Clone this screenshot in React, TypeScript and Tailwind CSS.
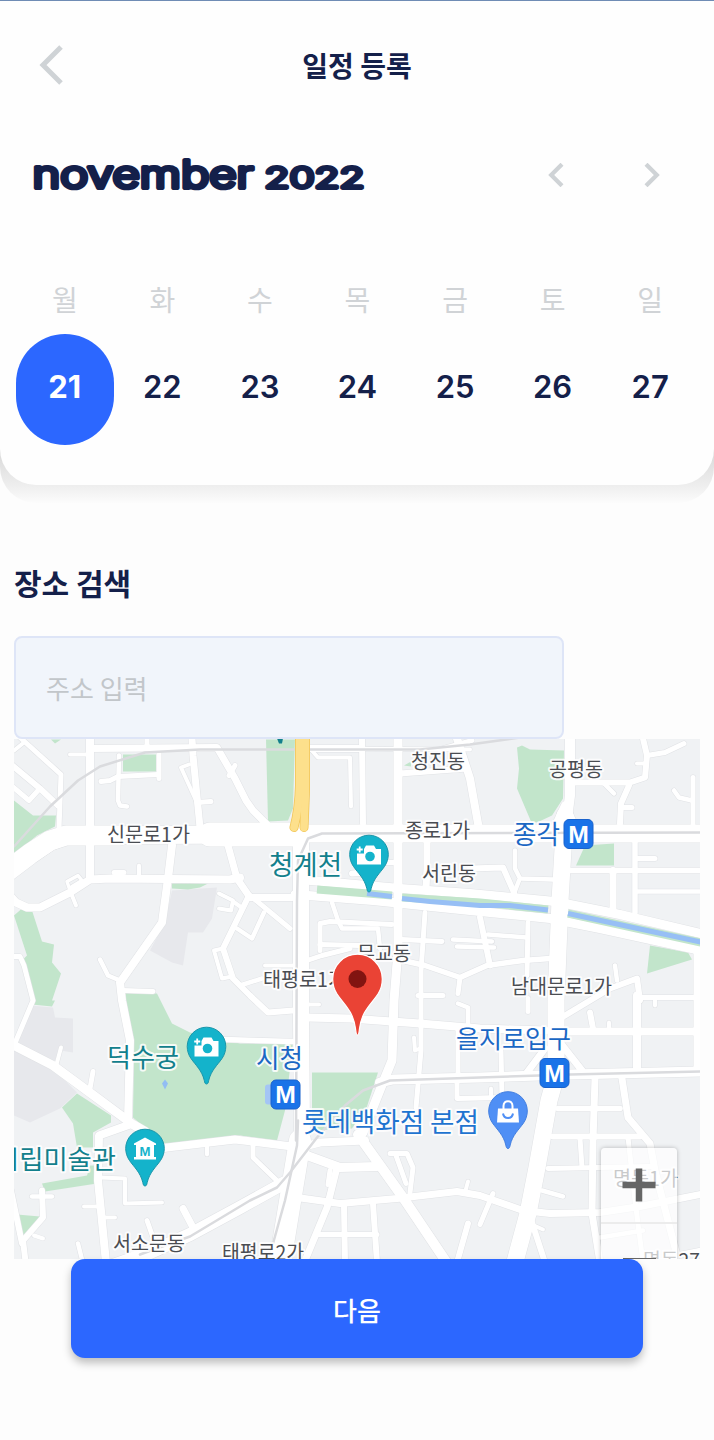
import React from "react";

const KR = "font-['Noto_Sans_CJK_KR',sans-serif]";

const days = [
  { name: "월", date: 21, active: true },
  { name: "화", date: 22 },
  { name: "수", date: 23 },
  { name: "목", date: 24 },
  { name: "금", date: 25 },
  { name: "토", date: 26 },
  { name: "일", date: 27 },
];

const parks = [
  "14,800 33,815 56,815 55,826 37,835 14,854",
  "123,754 156,754 156,771 123,771",
  "172,883 210,882 200,887 188,889 172,888",
  "14,915 22,908 32,910 42,941 54,944 52,962 61,973 52,1000 55,1000 52,1006 32,1004 24,958 27,955",
  "124,992 157,993 172,1023 190,1032 240,1043 293,1043 285,1110 277,1140 240,1135 165,1145 133,1117 134,1040",
  "77,1093 111,1115 111,1122 93,1132 93,1147 77,1147 73,1123 62,1107",
  "42,1183 87,1175 90,1165 97,1165 97,1183 45,1191",
  "17,1214 40,1216 23,1238",
  "266,739 295,739 293,808 288,820 268,821",
  "312,1072 378,1072 367,1106 352,1128 312,1130",
  "517,747 522,745 530,749 564,750 563,798 552,815 537,822 531,821 517,788 519,768",
  "576,865 585,845 614,843 614,865",
  "647,973 650,945 688,952 692,959",
  "51,739 61,739 55,743",
  "404,765 411,761 411,766",
];

const blocks = [
  "172,890 217,887 212,918 203,932 188,932 183,965 172,962 150,950 165,922",
  "30,1005 53,1007 55,1017 73,1018 73,1052 60,1050 53,1063 17,1043",
  "14,1050 53,1068 77,1092 60,1108 30,1122 14,1115",
];

const roads: [string, number][] = [
  ["90,735 90,878", 8],
  ["5,874 30,855 50,841 66,835 240,834 300,833 705,833", 18],
  ["5,872 30,853 50,840 66,835 120,835", 20],
  ["210,834 300,834", 24],
  ["90,748 217,747 235,778 246,800 253,810 267,824", 7],
  ["70,754 90,754", 4],
  ["14,750 24,742", 4],
  ["20,737 61,774 59,828", 5],
  ["10,763 40,788 58,805", 6],
  ["10,784 29,800 38,790", 5],
  ["147,739 147,748", 5],
  ["8,893 16,902 27,907 40,907 70,892 90,879 110,878 230,879 240,877", 8],
  ["70,890 67,881 78,875 82,880 72,886", 3.5],
  ["70,890 76,905", 4],
  ["114,872 124,872", 5],
  ["139,865 139,876", 4],
  ["172,845 168,878 162,922 120,982 122,1000 130,1040 128,1120", 8],
  ["100,959 108,975 120,980", 4.5],
  ["123,990 153,991", 5],
  ["119,755 118,800 120,805 127,806", 4.5],
  ["101,781 110,780 118,776 158,774", 5],
  ["159,748 159,778", 5],
  ["192,738 193,755 200,827", 7],
  ["189,764 181,767 196,800", 4],
  ["197,802 211,801", 5],
  ["229,775 235,765", 5],
  ["228,845 237,878 250,897 292,897", 7],
  ["250,895 290,928", 5],
  ["248,897 223,948 233,978 250,995 268,1012 293,1010", 6],
  ["223,948 214,950 222,978 232,976", 4],
  ["237,928 252,938 264,912", 4.5],
  ["219,893 233,900 231,910 219,908", 4],
  ["233,901 243,908", 4],
  ["10,956 20,956 24,965 33,1000 14,1045", 5],
  ["301,842 301,1020 302,1130 296,1170 288,1200", 16],
  ["300,1140 280,1262", 22],
  ["362,738 363,823", 6],
  ["310,748 362,748", 7],
  ["310,748 318,757 350,757 351,806", 4],
  ["398,738 398,950 394,1000 392,1060 383,1082 363,1132", 9],
  ["400,773 467,768", 6],
  ["457,738 470,778 478,823", 8],
  ["440,749 472,740", 5],
  ["311,748 470,749", 4],
  ["300,879 400,888 470,893 555,901 620,914 705,934", 9],
  ["295,894 373,900 470,910 550,918 600,928 705,951", 9],
  ["427,842 427,868 426,888", 7],
  ["352,873 365,872", 6],
  ["383,862 395,862", 5],
  ["332,902 338,920 342,928 378,928 380,948", 4.5],
  ["320,950 320,923 330,921 392,924", 5],
  ["320,944 360,945", 5],
  ["304,961 322,955 350,948", 5],
  ["402,939 442,941", 5],
  ["425,912 421,970 421,1050 416,1107", 5],
  ["414,1037 415,1050 420,1048", 4],
  ["453,939 492,941", 4.5],
  ["457,946 494,947", 4.5],
  ["480,917 490,965", 6],
  ["403,960 425,965 460,977 487,965 523,960 550,958", 5.5],
  ["460,977 458,993", 5],
  ["488,934 527,937", 4.5],
  ["528,922 527,975", 5],
  ["418,995 443,995", 5],
  ["265,965 293,965", 4],
  ["240,985 262,978", 4.5],
  ["570,735 570,795 565,833", 10],
  ["565,815 560,900 556,1000 556,1075 549,1100 537,1167 528,1213 514,1265", 17],
  ["552,833 565,805 578,833", 8],
  ["575,782 630,782 645,777 647,755 643,738", 6],
  ["637,763 647,763", 4],
  ["647,755 665,752 684,743", 5],
  ["603,782 614,793", 4.5],
  ["629,785 621,803 620,823", 6],
  ["622,807 632,807", 5],
  ["693,777 693,823", 5],
  ["674,790 679,797 692,800", 4.5],
  ["635,842 635,912", 5.5],
  ["637,858 655,858", 5],
  ["570,870 705,870", 5.5],
  ["637,891 705,891", 4.5],
  ["613,870 613,908", 7],
  ["515,850 515,868 520,878 553,879", 4.5],
  ["519,880 514,893", 4.5],
  ["470,868 503,867 514,892", 6],
  ["615,965 617,980", 4.5],
  ["560,1018 610,988 637,978 640,1000", 6],
  ["637,995 637,1070", 8],
  ["560,1031 705,1031", 8],
  ["590,1012 593,1028", 6],
  ["609,1022 609,1030", 4],
  ["697,950 697,1067", 7],
  ["640,997 700,997", 5],
  ["380,1082 393,1079 480,1077 570,1074 705,1071", 10],
  ["560,1042 582,1070", 7],
  ["545,1048 527,1072", 7],
  ["501,1050 502,1097 457,1098 457,1080", 5],
  ["491,1088 491,1097", 4],
  ["307,1017 350,1018 420,1023 480,1028 545,1030", 8],
  ["307,1004 319,1004", 4],
  ["458,1003 468,1007 468,1027", 4.5],
  ["458,1030 458,1072", 5],
  ["528,998 528,1011", 5],
  ["655,998 655,1005", 4],
  ["223,1039 293,1041", 5.5],
  ["10,1043 53,1065 87,1090 133,1124 145,1131", 9],
  ["61,1047 56,1066", 4],
  ["93,1071 90,1088", 5],
  ["150,1150 167,1147 235,1139 300,1147 320,1142 365,1140", 8],
  ["207,1145 207,1154", 4],
  ["130,1124 99,1135 98,1180 106,1262", 8],
  ["100,1177 125,1178 125,1203 162,1202", 4],
  ["84,1206 102,1206", 4],
  ["105,1217 115,1217", 4],
  ["32,1196 52,1196", 4.5],
  ["42,1190 43,1217 23,1240 26,1265", 6],
  ["11,1190 22,1243", 6],
  ["34,1235 43,1238", 4],
  ["183,1208 193,1227", 7],
  ["147,1220 153,1237", 5],
  ["78,1243 82,1259", 4.5],
  ["110,1266 150,1252 190,1234 240,1207 285,1182", 13],
  ["358,1134 403,1197 450,1267", 10],
  ["307,1155 340,1167 377,1166", 9],
  ["337,1167 327,1207 303,1265", 7],
  ["297,1197 340,1203 397,1198 457,1191 480,1195 523,1210 550,1213 600,1212 640,1206 705,1193", 7],
  ["344,1205 345,1262", 6],
  ["373,1203 377,1262", 6],
  ["318,1234 377,1234", 5],
  ["390,1153 407,1153 413,1167 410,1192", 5],
  ["396,1155 406,1183", 5],
  ["330,1170 328,1184", 5],
  ["468,1181 465,1192", 4],
  ["468,1223 457,1262", 6],
  ["253,1143 253,1157 280,1183", 5],
  ["595,1078 593,1140 592,1213 600,1262", 7],
  ["558,1108 620,1108", 5.5],
  ["622,1078 628,1117 650,1143 655,1170 677,1255", 7],
  ["553,1136 640,1136", 6],
  ["628,1137 635,1200 643,1262", 5],
  ["548,1168 650,1166", 5],
  ["580,1138 582,1167", 5],
  ["542,1190 563,1196", 4.5],
  ["532,1222 545,1262", 6],
  ["534,1225 543,1229", 4],
  ["493,1193 480,1224", 5],
  ["600,1237 643,1230", 4.5],
  ["677,1255 701,1250", 6],
];

const rails = [
  "14,846 50,806 78,780 100,766 145,752 200,749 420,749 470,744 520,737",
  "296,1140 297,900 298,860 308,838 322,833 705,832",
  "701,1071 570,1074 480,1077 390,1080 363,1090 345,1105 317,1137 290,1172 277,1187 250,1200 190,1236 140,1254",
  "298,1120 297,1145 285,1200 273,1243",
];

const labels: { t: string; x: number; y: number; w: number; s: number; c: string }[] = [
  { t: "청진동", x: 411, y: 768, w: 54, s: 20, c: "#4a4d52" },
  { t: "공평동", x: 549, y: 776, w: 54, s: 20, c: "#4a4d52" },
  { t: "신문로1가", x: 107, y: 841, w: 83, s: 20, c: "#4a4d52" },
  { t: "종로1가", x: 405, y: 837, w: 65, s: 20, c: "#4a4d52" },
  { t: "서린동", x: 422, y: 880, w: 54, s: 20, c: "#4a4d52" },
  { t: "무교동", x: 357, y: 960, w: 54, s: 20, c: "#4a4d52" },
  { t: "태평로1가", x: 263, y: 986, w: 83, s: 20, c: "#4a4d52" },
  { t: "남대문로1가", x: 511, y: 993, w: 101, s: 20, c: "#4a4d52" },
  { t: "서소문동", x: 113, y: 1250, w: 72, s: 20, c: "#4a4d52" },
  { t: "태평로2가", x: 222, y: 1259, w: 82, s: 20, c: "#4a4d52" },
  { t: "명동1가", x: 613, y: 1185, w: 65, s: 20, c: "#4a4d52" },
  { t: "명동27", x: 643, y: 1267, w: 57, s: 20, c: "#4a4d52" },
  { t: "청계천", x: 269, y: 874, w: 73, s: 27, c: "#12808c" },
  { t: "덕수궁", x: 107, y: 1066, w: 72, s: 26, c: "#12808c" },
  { t: "시립미술관", x: -5, y: 1168, w: 121, s: 26, c: "#12808c" },
  { t: "종각", x: 513, y: 843, w: 47, s: 26, c: "#1a67c4" },
  { t: "시청", x: 256, y: 1067, w: 47, s: 26, c: "#1a67c4" },
  { t: "을지로입구", x: 456, y: 1047, w: 115, s: 25, c: "#1a67c4" },
  { t: "롯데백화점 본점", x: 302, y: 1131, w: 177, s: 27, c: "#1f74d0" },
];

function Chevron({ className, flip, width }: { className: string; flip?: boolean; width: number }) {
  return (
    <svg viewBox="0 0 24 40" className={className} fill="none" stroke="#cfd3d6" strokeWidth={width}>
      <path d={flip ? "M2 2L20 20L2 38" : "M22 2L4 20L22 38"} />
    </svg>
  );
}

function PoiPin({ x, y, fill, edge, children }: { x: number; y: number; fill: string; edge: string; children: React.ReactNode }) {
  return (
    <g transform={`translate(${x} ${y})`}>
      <path
        d="M0 37.500C-1.500 37.500-1.800 36-2.200 34C-4.500 24-11 18.500-15.500 12C-18 8.500-19.300 4-19.300 0A19.300 19.300 0 0 1 19.300 0C19.300 4 18 8.500 15.500 12C11 18.500 4.500 24 2.200 34C1.800 36 1.500 37.500 0 37.500Z"
        fill={fill}
        stroke={edge}
      />
      {children}
    </g>
  );
}

function Camera({ hole }: { hole: string }) {
  return (
    <>
      <path d="M-5 -5.500L-3 -9H5L7 -5.500H12V10H-12V-1H-5Z" fill="#fff" />
      <path d="M-9.300 -8V-2M-12.300 -5H-6.300" stroke="#fff" strokeWidth="1.800" />
      <circle cx="1" cy="2" r="4.800" fill={hole} />
    </>
  );
}

function Metro({ x, y }: { x: number; y: number }) {
  return (
    <g transform={`translate(${x} ${y})`}>
      <rect x="-14.500" y="-14.500" width="29" height="29" rx="5" fill="#1a73e8" stroke="#1962cc" />
      <text
        x="-10.300"
        y="8.500"
        fontSize="23.500"
        textLength="20.600"
        lengthAdjust="spacingAndGlyphs"
        className="fill-white font-['Liberation_Sans',sans-serif] font-bold"
      >
        M
      </text>
    </g>
  );
}

function CityMap() {
  return (
    <svg viewBox="14 738.500 686 520" className="block h-[520px] w-[686px]" strokeLinejoin="round" strokeLinecap="round">
      <rect x="14" y="738" width="688" height="521" fill="#f0f2f4" />
      {blocks.map((p) => (
        <polygon key={p} points={p} fill="#e7e8ec" />
      ))}
      {parks.map((p) => (
        <polygon key={p} points={p} fill="#c2e5cb" />
      ))}
      <path d="M165 1079L168 1083L165 1089L162 1083Z" fill="#92bdf3" />
      <g fill="none" stroke="#e0e2e5">
        {roads.map(([p, w]) => (
          <polyline key={p} points={p} strokeWidth={w + 1} />
        ))}
      </g>
      <g fill="none" stroke="#fff">
        {roads.map(([p, w]) => (
          <polyline key={p} points={p} strokeWidth={w} />
        ))}
      </g>
      <g fill="none" stroke="#dadbde" strokeWidth="2.500">
        {rails.map((p) => (
          <polyline key={p} points={p} />
        ))}
      </g>
      <g fill="none" stroke="#f1c557" strokeWidth="9">
        <path d="M299.500 734V785Q299 808 294 827" />
        <path d="M305.500 734V790L304 827" />
      </g>
      <g fill="none" stroke="#fde08c" strokeWidth="7.500">
        <path d="M299.500 734V785Q299 808 294 827" />
        <path d="M305.500 734V790L304 827" />
      </g>
      <g fill="none" strokeLinecap="butt">
        <path d="M317 889L368 893L392 895M402 897L480 902L548 909M568 913L705 943" stroke="#c2e5cb" strokeWidth="8" />
        <path d="M367 893L392 896M402 898L430 901L480 905L510 905L548 909.500M568 913L705 942.500" stroke="#97bff5" strokeWidth="5" />
      </g>
      <path d="M277 738H283L282 743H279Z" fill="#12808c" />
      <rect x="265" y="1084" width="12" height="20" rx="3" fill="#a4c5f5" />
      <g className={KR} stroke="#ffffff" strokeOpacity="0.850" strokeWidth="4" paintOrder="stroke">
        {labels.map((l) => (
          <text key={l.t} x={l.x} y={l.y} fontSize={l.s} fill={l.c} textLength={l.w} lengthAdjust="spacingAndGlyphs">
            {l.t}
          </text>
        ))}
      </g>
      <g strokeLinecap="butt" strokeLinejoin="miter">
        <Metro x={578.5} y={833.5} />
        <Metro x={285.5} y={1094} />
        <Metro x={554.5} y={1072.5} />
        <PoiPin x={369} y={854} fill="#14b3cb" edge="#1a96aa">
          <Camera hole="#14b3cb" />
        </PoiPin>
        <PoiPin x={206.5} y={1046} fill="#14b3cb" edge="#1a96aa">
          <Camera hole="#14b3cb" />
        </PoiPin>
        <PoiPin x={145} y={1148} fill="#14b3cb" edge="#1a96aa">
          <path d="M0 -11L11 -5V-3.500H9V8.500H11V11H-11V8.500H-9V-3.500H-11V-5Z" fill="#fff" />
          <text x="-5.500" y="7.500" fontSize="13" textLength="11" lengthAdjust="spacingAndGlyphs" className="fill-[#14b3cb] font-['Liberation_Sans',sans-serif] font-bold">
            M
          </text>
        </PoiPin>
        <PoiPin x={508} y={1110.500} fill="#4f8ff5" edge="#4480e0">
          <path d="M-10 -2.500H10L11 11.500H-11Z" fill="#fff" />
          <path d="M-4.500 -2V-5C-4.500 -11.500 4.500 -11.500 4.500 -5V-2" fill="none" stroke="#fff" strokeWidth="2" />
          <path d="M-5 2.500C-4 8.500 4 8.500 5 2.500" fill="none" stroke="#4f8ff5" strokeWidth="2" />
        </PoiPin>
      </g>
      <path
        d="M357.500 1034.500C356 1034.500 356 1032 355.500 1028C353 1010 344 1004 337 993.500C334 989 332.700 983.500 332.700 978.500A24.800 24.800 0 0 1 382.300 978.500C382.300 983.500 381 989 378 993.500C371 1004 362 1010 359.500 1028C359 1032 359 1034.500 357.500 1034.500Z"
        fill="#ea4335"
        stroke="#fff"
        strokeWidth="1.200"
      />
      <circle cx="357.500" cy="978.500" r="9" fill="#811411" />
    </svg>
  );
}

export default function App() {
  return (
    <div className={`flex h-[1440px] w-[714px] flex-col overflow-hidden bg-[#fdfdfd] text-[#14204a] ${KR}`}>
      <div className="h-[503px] shrink-0 rounded-b-[36px] bg-linear-to-b from-[#d4d4d4] from-[88%] via-[#eeeeee] via-[96.5%] to-[#fcfcfc] to-[100%]">
        <section className="h-[485px] rounded-b-[36px] border-t border-[#6f8cb5] bg-[#fefefe]">
          <header className="grid h-[127px] grid-cols-[1fr_auto_1fr] items-center px-[39px]">
            <Chevron className="h-10 w-6" width={5} />
            <h1 className="text-[28px] leading-none font-bold">일정 등록</h1>
          </header>
          <div className="flex h-[94px] items-center justify-between pr-[54px] pl-8">
            <svg className="h-[70px] w-[340px] overflow-visible" viewBox="32 139 340 70">
              <g strokeLinejoin="round" strokeLinecap="round" className="fill-[#14204a] stroke-[#14204a] font-[Inter,sans-serif]">
                <text x="32.500" y="186.500" fontSize="37.500" textLength="221" lengthAdjust="spacingAndGlyphs" strokeWidth="4.200" className="font-light">
                  november
                </text>
                <text x="264.500" y="186.500" fontSize="28.500" textLength="100" lengthAdjust="spacingAndGlyphs" strokeWidth="3.800" className="font-light">
                  2022
                </text>
              </g>
            </svg>
            <div className="flex gap-[80px]">
              <Chevron className="h-6 w-[16px]" width={7} />
              <Chevron className="h-6 w-[16px]" width={7} flip />
            </div>
          </div>
          <div className="mt-[46px] grid grid-cols-7 pr-[15px] pl-4">
            {days.map((d) => (
              <div key={d.date} className="flex flex-col items-center">
                <div className="flex h-[66px] items-center pb-1 text-[28px] text-[#d0d3d6]">{d.name}</div>
                <div
                  className={
                    d.active
                      ? "flex h-[111px] w-full items-center justify-center rounded-[49px] bg-[#2c67ff] pb-1 font-[Inter,sans-serif] text-[31px] font-bold text-white"
                      : "flex h-[111px] w-full items-center justify-center pb-1 font-[Inter,sans-serif] text-[31px] font-semibold"
                  }
                >
                  {d.date}
                </div>
              </div>
            ))}
          </div>
        </section>
      </div>

      <section className="flex flex-col pl-[14px]">
        <h2 className="mt-[57px] flex h-11 items-center text-[30px] font-bold">장소 검색</h2>
        <div className="mt-[32px] flex h-[103px] w-[550px] items-center rounded-lg border-2 border-[#dee5f7] bg-[#f1f5fb] pl-[30px] text-[26px] text-[#c2c6ca]">
          주소 입력
        </div>
        <div className="relative h-[520px] w-[686px] overflow-hidden">
          <CityMap />
          <div className="absolute top-[409px] left-[587px] flex w-[76px] flex-col rounded-sm bg-white/70 shadow-[0_0_4px_rgba(0,0,0,0.25)]">
            <div className="flex h-[76px] items-center justify-center border-b-2 border-[#ececec]">
              <svg viewBox="0 0 34 34" className="size-[34px]" stroke="#666" strokeWidth="6.500">
                <path d="M17 0.500V33.500M0.500 17H33.500" />
              </svg>
            </div>
            <div className="flex h-[74px] items-center justify-center">
              <div className="h-[6px] w-[33px] bg-[#666]" />
            </div>
          </div>
        </div>
      </section>

      <button className="z-10 ml-[71px] flex h-[99px] w-[572px] shrink-0 items-center justify-center rounded-[14px] bg-[#2c67ff] pt-0.5 text-[26px] font-medium text-white shadow-[0_5px_9px_rgba(0,0,0,0.25)]">
        다음
      </button>
    </div>
  );
}
